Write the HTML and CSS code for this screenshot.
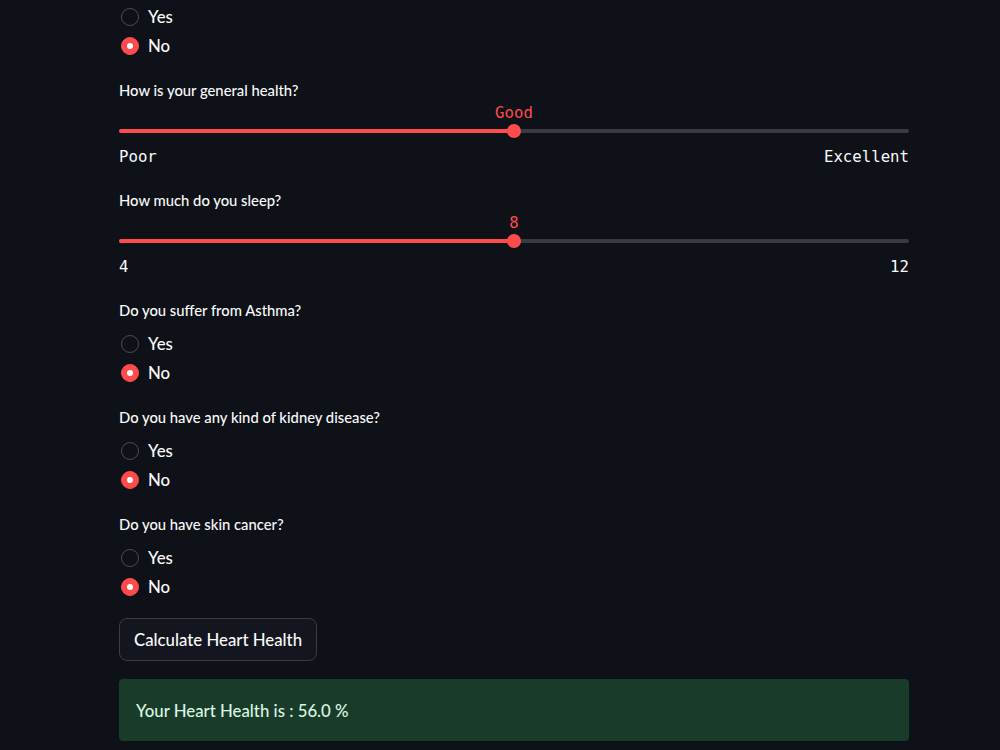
FILE: index.html
```html
<!DOCTYPE html>
<html lang="en">
<head>
    <meta charset="UTF-8">
    <meta name="viewport" content="width=device-width, initial-scale=1.0">
    <title>Heart Health</title>
    <link rel="stylesheet" href="styles.css">
</head>
<body>
    <div class="main">
        <div class="radio-group first">
            <div class="radio"><span class="dot"></span>Yes</div>
            <div class="radio"><span class="dot checked"></span>No</div>
        </div>

        <div class="slider">
            <div class="label">How is your general health?</div>
            <div class="track-wrap">
                <div class="track"><div class="fill" style="width: 50%"></div></div>
                <div class="thumb" style="left: 50%"><span class="thumb-value">Good</span></div>
            </div>
            <div class="ticks"><span>Poor</span><span>Excellent</span></div>
        </div>

        <div class="slider">
            <div class="label">How much do you sleep?</div>
            <div class="track-wrap">
                <div class="track"><div class="fill" style="width: 50%"></div></div>
                <div class="thumb" style="left: 50%"><span class="thumb-value">8</span></div>
            </div>
            <div class="ticks"><span>4</span><span>12</span></div>
        </div>

        <div class="radio-group">
            <div class="label">Do you suffer from Asthma?</div>
            <div class="radio"><span class="dot"></span>Yes</div>
            <div class="radio"><span class="dot checked"></span>No</div>
        </div>

        <div class="radio-group">
            <div class="label">Do you have any kind of kidney disease?</div>
            <div class="radio"><span class="dot"></span>Yes</div>
            <div class="radio"><span class="dot checked"></span>No</div>
        </div>

        <div class="radio-group">
            <div class="label">Do you have skin cancer?</div>
            <div class="radio"><span class="dot"></span>Yes</div>
            <div class="radio"><span class="dot checked"></span>No</div>
        </div>

        <button class="calc">Calculate Heart Health</button>

        <div class="success">Your Heart Health is : 56.0 %</div>
    </div>
</body>
</html>
```

FILE: styles.css
```css
body {
    margin: 0;
    background: #0e1117;
    color: #fafafa;
    font-family: Lato, "Open Sans", sans-serif;
    font-weight: 500;
}
.main {
    width: 790px;
    margin-left: 119px;
    padding-top: 2px;
}
.label {
    font-size: 14.8px;
    line-height: 20px;
    height: 20px;
    margin-bottom: 9px;
}
.radio-group {
    margin-bottom: 20px;
}
.radio {
    display: flex;
    align-items: center;
    height: 29px;
    font-size: 16.8px;
}
.dot {
    box-sizing: border-box;
    width: 18px;
    height: 18px;
    border-radius: 50%;
    border: 1px solid #4b4d54;
    margin: 0 9px 0 2px;
    display: flex;
    align-items: center;
    justify-content: center;
}
.dot.checked {
    background: #ff4b4b;
    border-color: #ff4b4b;
}
.dot.checked::after {
    content: "";
    width: 6px;
    height: 6px;
    border-radius: 50%;
    background: #fff;
}
.slider {
    margin-bottom: 23px;
}
.slider .label {
    margin-bottom: 0;
}
.track-wrap {
    position: relative;
    height: 24px;
    margin-top: 19px;
    display: flex;
    align-items: center;
}
.track {
    flex: 1;
    height: 4px;
    border-radius: 2px;
    background: #393b42;
}
.fill {
    height: 100%;
    border-radius: 2px;
    background: #ff4b4b;
}
.thumb {
    position: absolute;
    top: 5px;
    width: 14px;
    height: 14px;
    margin-left: -7px;
    border-radius: 50%;
    background: #ff4b4b;
}
.thumb-value {
    position: absolute;
    bottom: 15px;
    left: 50%;
    transform: translateX(-50%);
    color: #ff4b4b;
    font-family: "DejaVu Sans Mono", monospace;
    font-weight: 400;
    font-size: 15.7px;
    line-height: 20px;
    white-space: nowrap;
}
.ticks {
    display: flex;
    justify-content: space-between;
    margin-top: 4px;
    line-height: 20px;
    font-family: "DejaVu Sans Mono", monospace;
    font-weight: 400;
    font-size: 15.7px;
}
.calc {
    display: block;
    height: 43px;
    padding: 0 14px;
    margin-top: -3px;
    background: #13161e;
    color: #fafafa;
    border: 1px solid #3a3d45;
    border-radius: 8px;
    font-family: Lato, "Open Sans", sans-serif;
    font-weight: 500;
    font-size: 16.8px;
}
.success {
    margin-top: 18px;
    height: 62px;
    box-sizing: border-box;
    padding: 0 17px;
    display: flex;
    align-items: center;
    background: #193c2a;
    color: #dcf5e3;
    border-radius: 4px;
    font-size: 16.8px;
}
```
